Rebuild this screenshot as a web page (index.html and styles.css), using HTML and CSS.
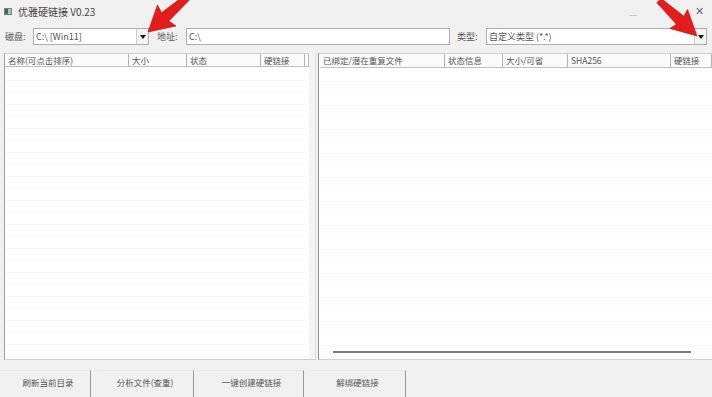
FILE: index.html
```html
<!DOCTYPE html>
<html>
<head>
    <meta charset="UTF-8">
    <link rel="stylesheet" href="styles.css">
</head>
<body>
    <div class="window">
        <div class="titlebar">
            <span class="app-icon"></span>
            <span class="title">优雅硬链接 V0.23</span>
            <span class="spacer"></span>
            <span class="win-btn min">—</span>
            <span class="win-btn close">✕</span>
        </div>

        <div class="toolbar">
            <span class="label">磁盘:</span>
            <div class="combo drive">
                <span class="combo-text">C:\ [Win11]</span>
                <span class="drop"></span>
            </div>
            <span class="label addr-label">地址:</span>
            <div class="input address">C:\</div>
            <span class="label type-label">类型:</span>
            <div class="combo type">
                <span class="combo-text">自定义类型 (*.*)</span>
                <span class="drop"></span>
            </div>
        </div>

        <div class="panels">
            <div class="list left-list">
                <div class="list-head">
                    <div class="col" style="width:124px">名称(可点击排序)</div>
                    <div class="col" style="width:58px">大小</div>
                    <div class="col" style="width:74px">状态</div>
                    <div class="col" style="width:44px">硬链接</div>
                    <div class="col" style="width:4px"></div>
                </div>
                <div class="list-body" id="leftBody"></div>
                <div class="vscroll"></div>
            </div>
            <div class="list right-list">
                <div class="list-head">
                    <div class="col" style="width:125px">已绑定/潜在重复文件</div>
                    <div class="col" style="width:58px">状态信息</div>
                    <div class="col" style="width:65px">大小/可省</div>
                    <div class="col" style="width:103px">SHA256</div>
                    <div class="col" style="width:41px">硬链接</div>
                </div>
                <div class="list-body" id="rightBody"></div>
                <div class="hscroll"></div>
            </div>
        </div>

        <div class="buttons">
            <button class="btn b1">刷新当前目录</button>
            <button class="btn b2">分析文件(查重)</button>
            <button class="btn b3">一键创建硬链接</button>
            <button class="btn b4">解绑硬链接</button>
        </div>
    </div>

    <svg class="arrows" width="712" height="397" viewBox="0 0 712 397">
        <polygon class="arrow" points="0,-3 34,-5.5 32,-14 57,0 32,14 34,5.5 0,3"
                 transform="translate(148,32) rotate(138.6) translate(-57,0)"/>
        <polygon class="arrow" points="0,-3 29,-5.5 27,-13 52,0 27,13 29,5.5 0,3"
                 transform="translate(697,36) rotate(43) translate(-52,0)"/>
    </svg>

    <script>
        // faint empty rows in both lists
        ['leftBody', 'rightBody'].forEach(id => {
            const body = document.getElementById(id);
            for (let i = 0; i < 24; i++) {
                const row = document.createElement('div');
                row.className = 'row';
                body.appendChild(row);
            }
        });
    </script>
</body>
</html>
```

FILE: styles.css
```css
* {
    margin: 0;
    padding: 0;
    box-sizing: border-box;
}

body {
    width: 712px;
    height: 397px;
    overflow: hidden;
    background: #f0f0f0;
    font-family: "Noto Sans CJK SC", "Liberation Sans", sans-serif;
    font-size: 9px;
    color: #555;
    position: relative;
}

.window {
    display: flex;
    flex-direction: column;
    height: 100%;
}

.titlebar {
    height: 22px;
    display: flex;
    align-items: center;
    padding: 0 8px 0 4px;
}

.app-icon {
    width: 8px;
    height: 7px;
    background: linear-gradient(90deg, #3d6b5a 0 50%, #a9c4b8 50%);
    border: 1px solid #6a8a7c;
    margin-right: 6px;
}

.title {
    font-size: 10px;
    color: #444;
}

.spacer {
    flex: 1;
}

.win-btn {
    color: #666;
    font-size: 11px;
}

.min {
    font-size: 9px;
    color: #aaa;
    margin-right: 58px;
    margin-top: 6px;
}

.close {
    font-size: 11px;
    margin-top: -2px;
}

.toolbar {
    display: flex;
    align-items: center;
    height: 17px;
    margin-top: 6px;
    padding-left: 5px;
}

.label {
    width: 28px;
    font-size: 9px;
    color: #555;
}

.addr-label {
    margin-left: 8px;
    width: 29px;
}

.type-label {
    margin-left: 7px;
    width: 29px;
}

.combo,
.input {
    height: 17px;
    background: #fff;
    border: 1px solid #adadad;
    display: flex;
    align-items: center;
    font-size: 9px;
    color: #555;
}

.combo-text {
    flex: 1;
    padding-left: 2px;
}

.drive {
    width: 116px;
}

.address {
    width: 264px;
    padding-left: 2px;
}

.type {
    width: 221px;
}

.drop {
    width: 12px;
    height: 100%;
    border-left: 1px solid #cfcfcf;
    background: #f4f4f4;
    position: relative;
}

.drop::after {
    content: "";
    position: absolute;
    left: 3px;
    top: 6px;
    border-left: 3px solid transparent;
    border-right: 3px solid transparent;
    border-top: 4px solid #111;
}

.panels {
    display: flex;
    margin-top: 8px;
    height: 307px;
    padding-left: 4px;
    gap: 2px;
}

.list {
    background: #fff;
    border-left: 1px solid #a0a0a0;
    border-bottom: 1px solid #cfcfcf;
    display: flex;
    flex-direction: column;
    position: relative;
    overflow: hidden;
}

.left-list {
    width: 312px;
    border-right: 1px solid #dcdcdc;
}

.right-list {
    flex: 1;
    border-left: 1px solid #909090;
    border-top: 1px solid #cfcfcf;
}

.list-head {
    display: flex;
    height: 14px;
    flex-shrink: 0;
    border-top: 1px solid #cfcfcf;
    border-bottom: 1px solid #c0c0c0;
    background: #fafafa;
}

.right-list .list-head {
    border-top: none;
    margin-left: 1px;
}

.col {
    flex-shrink: 0;
    border-right: 1px solid #b4b4b4;
    padding-left: 3px;
    font-size: 8.5px;
    line-height: 13px;
    color: #555;
    white-space: nowrap;
    overflow: hidden;
}

.list-body {
    flex: 1;
    overflow: hidden;
    padding-top: 2px;
}

.row {
    height: 12px;
    border-bottom: 1px solid #f8f8f8;
}

.vscroll {
    position: absolute;
    right: 0;
    top: 0;
    bottom: 0;
    width: 6px;
    background: #f3f3f3;
}

.hscroll {
    position: absolute;
    left: 14px;
    bottom: 6px;
    width: 358px;
    height: 2px;
    background: #7c7c7c;
}

.buttons {
    display: flex;
    margin-top: 10px;
    flex: 1;
    gap: 6px;
}

.btn {
    height: 100%;
    background: #f0f0f0;
    border: none;
    border-top: 1px solid #e8e8e8;
    border-right: 1px solid #9a9a9a;
    font-family: inherit;
    font-size: 8.5px;
    color: #555;
    padding-bottom: 4px;
}

.b1 { width: 91px; padding-left: 6px; }
.b2 { width: 97px; }
.b3 { width: 104px; }
.b4 { width: 96px; }

.arrows {
    position: absolute;
    left: 0;
    top: 0;
    pointer-events: none;
}

.arrow {
    fill: #e51c1c;
    stroke: #b01010;
    stroke-width: 0.6;
}
```
